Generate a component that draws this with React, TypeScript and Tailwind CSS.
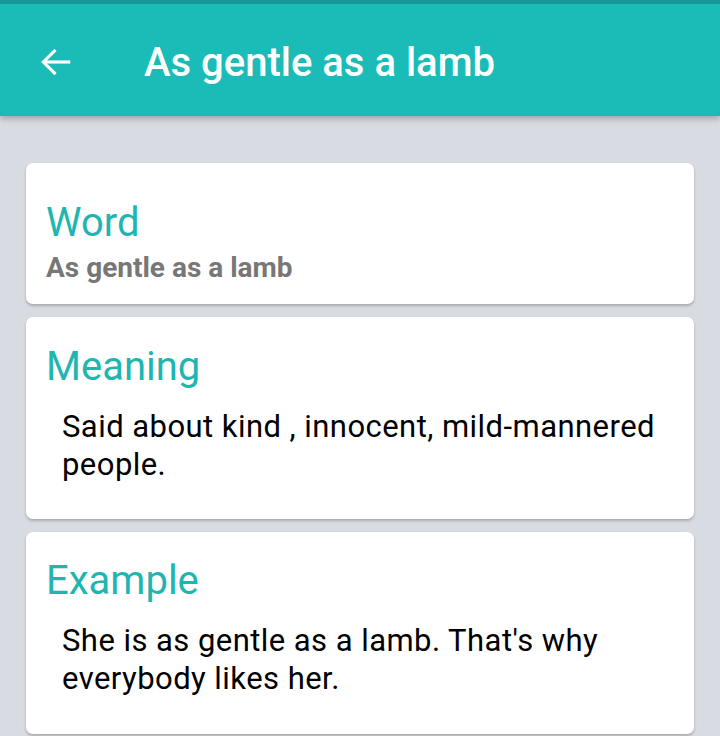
const Card = ({
  title,
  children,
  className,
}: {
  title: string;
  children: React.ReactNode;
  className?: string;
}) => (
  <div
    className={`bg-white rounded-[7px] mx-[26px] pl-[20px] pr-[16px] shadow-[0_2px_3px_rgba(0,0,0,0.22)] ${className ?? ''}`}
  >
    <h2 className="text-[40px] leading-[46px] text-[#1fb5b0] font-normal">
      {title}
    </h2>
    {children}
  </div>
);

export default function App() {
  return (
    <div
      className="w-[720px] h-[736px] overflow-hidden bg-[#d8dbe1] flex flex-col"
      style={{ fontFamily: 'Roboto, "Noto Sans", sans-serif' }}
    >
      <div className="bg-[#1bbcb7] shadow-[0_3px_6px_rgba(0,0,0,0.25)] z-10">
        <div className="h-[4px] bg-[#17979a]"></div>
        <div className="h-[112px] flex items-center">
          <svg
            width="38"
            height="38"
            viewBox="0 0 24 24"
            className="ml-[37px] mt-[4px]"
            fill="none"
            stroke="white"
            strokeWidth="2"
            strokeLinecap="square"
          >
            <path d="M20 12H5" />
            <path d="M11 5l-7 7 7 7" />
          </svg>
          <h1 className="ml-[69px] text-white text-[40px] font-medium leading-none pt-[5px]">
            As gentle as a lamb
          </h1>
        </div>
      </div>
      <div className="flex flex-col gap-[13px] pt-[47px]">
        <Card title="Word" className="pt-[37px] pb-[20px]">
          <p className="mt-[6px] text-[28px] leading-[32px] font-bold text-[#777777]">
            As gentle as a lamb
          </p>
        </Card>
        <Card title="Meaning" className="pt-[27px] pb-[35px]">
          <p className="mt-[18px] pl-[16px] text-[31px] leading-[38px] tracking-[0.45px] text-black">
            Said about kind , innocent, mild-mannered people.
          </p>
        </Card>
        <Card title="Example" className="pt-[26px] pb-[36px]">
          <p className="mt-[18px] pl-[16px] text-[31px] leading-[38px] tracking-[0.45px] text-black">
            She is as gentle as a lamb. That's why everybody likes her.
          </p>
        </Card>
      </div>
    </div>
  );
}
